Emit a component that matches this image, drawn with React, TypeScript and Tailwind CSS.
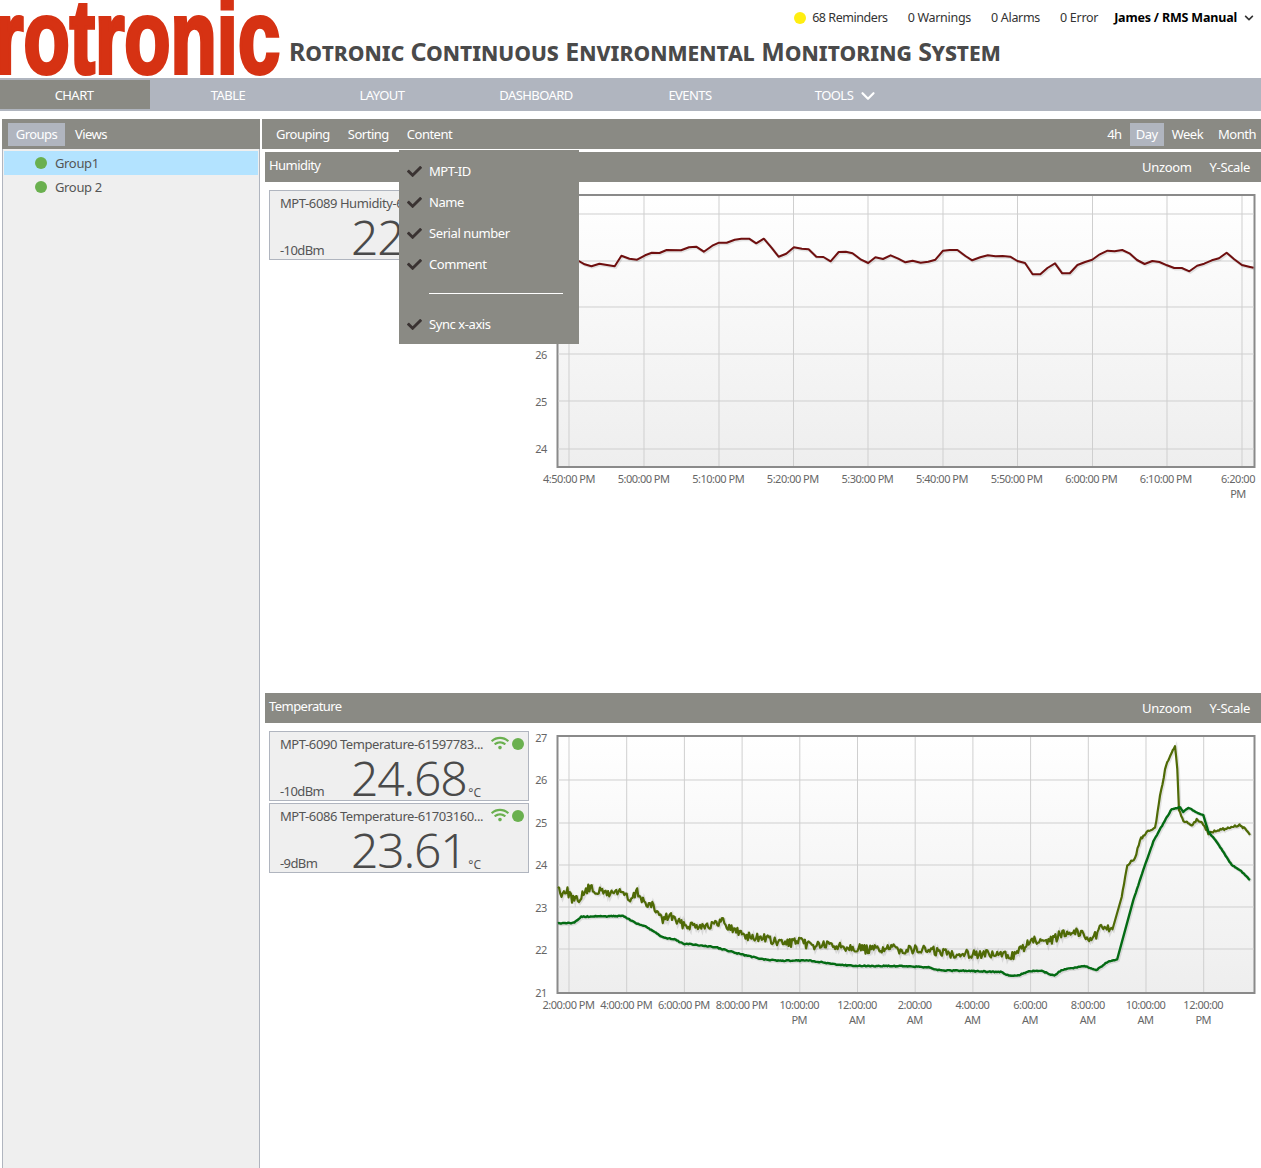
import { ChevronDown } from "lucide-react";
import { FaCheck, FaChevronDown, FaWifi } from "react-icons/fa";

const font = "font-['Noto_Sans','Open_Sans',sans-serif]";

const navItems = ["TABLE", "LAYOUT", "DASHBOARD", "EVENTS"];
const menuItems = ["MPT-ID", "Name", "Serial number", "Comment"];

// traced off the reference, crop coordinates
const humidityRaw = [
  [-40, 214], [42, 213], [55, 223], [70, 229], [88, 221], [105, 225], [122, 229], [137, 197], [155, 206], [172, 209],
  [190, 196], [205, 188], [222, 189], [238, 180], [270, 181], [288, 172], [304, 170], [321, 185], [340, 167], [355, 158],
  [372, 158], [390, 149], [405, 146], [422, 146], [438, 160], [455, 146], [472, 173], [488, 200], [505, 191], [522, 172],
  [540, 176], [555, 178], [572, 200], [588, 201], [604, 214], [622, 186], [638, 185], [653, 190], [672, 209], [688, 219],
  [704, 202], [721, 207], [738, 196], [755, 206], [771, 217], [787, 212], [805, 218], [822, 215], [838, 209], [855, 182],
  [870, 180], [887, 180], [905, 198], [920, 211], [938, 202], [955, 196], [972, 199], [988, 198], [1005, 200], [1021, 213],
  [1038, 219], [1055, 253], [1072, 253], [1088, 234], [1105, 220], [1121, 250], [1138, 250], [1155, 225], [1172, 216],
  [1188, 209], [1205, 193], [1222, 182], [1238, 184], [1255, 180], [1271, 190], [1288, 210], [1305, 222], [1322, 213],
  [1338, 216], [1355, 226], [1371, 234], [1388, 234], [1405, 244], [1422, 227], [1438, 221], [1455, 211], [1471, 205],
  [1488, 188], [1505, 208], [1522, 225], [1538, 230], [1548, 233],
];
const humidityLine = humidityRaw.map(([x, y]) => [560 + x * 0.448, 190 + y / 3]);

const oliveLeft = [
  [60, 48], [65, 70], [78, 58], [95, 95], [110, 80], [125, 55], [150, 65], [175, 70], [195, 60], [215, 95], [230, 65],
  [250, 105], [265, 110], [285, 150], [300, 135], [320, 160], [340, 165], [365, 165], [400, 165], [412, 150], [430, 175],
  [455, 190], [480, 205], [500, 200], [520, 215], [545, 220], [575, 215], [600, 225], [625, 225], [660, 228], [690, 230],
  [725, 240], [760, 235], [800, 238], [850, 240], [900, 250], [950, 250], [1000, 255], [1040, 255], [1065, 225], [1085, 210],
  [1105, 225], [1125, 205], [1150, 185], [1180, 185], [1195, 205], [1215, 195], [1228, 165], [1250, 178],
].map(([x, y]) => [530 + x * 0.466, 870 + y / 3]);
const oliveRight = [
  [365, 500], [382, 405], [405, 385], [420, 330], [440, 305], [465, 295], [480, 200], [495, 120], [505, 90], [525, 50],
  [532, 120], [537, 240], [550, 270], [575, 290], [590, 268], [610, 285], [625, 310], [650, 300], [680, 295], [715, 285],
  [735, 295], [750, 315],
].map(([x, y]) => [1000 + x / 3, 730 + y / 3]);

const greenLeft = [
  [60, 160], [95, 158], [110, 140], [200, 138], [225, 158], [250, 170], [285, 203], [310, 208], [330, 222], [340, 222],
  [400, 232], [450, 252], [500, 268], [540, 272], [600, 272], [670, 285], [700, 288], [800, 288], [855, 292], [875, 300],
  [1010, 306], [1030, 318], [1050, 316], [1070, 303], [1100, 303], [1125, 318], [1140, 300], [1190, 288], [1215, 300],
  [1240, 275], [1260, 268],
].map(([x, y]) => [530 + x * 0.466, 870 + y / 3]);
const greenRight = [
  [400, 510], [430, 420], [460, 335], [490, 280], [515, 237], [540, 232], [550, 245], [565, 233], [585, 245], [610, 255],
  [625, 305], [650, 335], [695, 405], [720, 420], [750, 450],
].map(([x, y]) => [1000 + x / 3, 730 + y / 3]);

function toPath(points: number[][]) {
  return points.map(([x, y], i) => `${i ? "L" : "M"}${x.toFixed(1)} ${y.toFixed(1)}`).join(" ");
}

// the sensor signal is noisy, so shake the traced outline a bit
function noisy(points: number[][], amount: number, seed: number) {
  let s = seed;
  const out: number[][] = [];
  for (let i = 0; i < points.length - 1; i++) {
    const [x0, y0] = points[i];
    const [x1, y1] = points[i + 1];
    const steps = Math.max(1, Math.round((x1 - x0) / 1.2));
    for (let k = 0; k < steps; k++) {
      s = (s * 1103515245 + 12345) % 2147483648;
      const r = (s >> 8) / 8388608 - 0.5;
      const t = k / steps;
      out.push([x0 + (x1 - x0) * t, y0 + (y1 - y0) * t + r * amount]);
    }
  }
  out.push(points[points.length - 1]);
  return out;
}

const olivePath = toPath([...noisy(oliveLeft, 9, 7), ...noisy(oliveRight, 2.5, 11)]);
const greenPath = toPath([...noisy(greenLeft, 1, 3), ...noisy(greenRight, 0.8, 5)]);

function Line({ d, color, width }: { d: string; color: string; width: number }) {
  return (
    <>
      <path d={d} fill="none" stroke="#000" strokeOpacity={0.1} strokeWidth={width + 1} transform="translate(1 1)" />
      <path d={d} fill="none" stroke={color} strokeWidth={width} strokeLinejoin="round" />
    </>
  );
}

function HumidityChart() {
  const hLines = [214, 261, 307, 354, 401, 449];
  const vLines = [569, 644, 719, 793.5, 868, 943, 1017.5, 1092.5, 1167, 1242];
  const labels = ["4:50:00 PM", "5:00:00 PM", "5:10:00 PM", "5:20:00 PM", "5:30:00 PM", "5:40:00 PM", "5:50:00 PM", "6:00:00 PM", "6:10:00 PM"];
  return (
    <svg viewBox="529 182 732 511" className="block h-[511px] w-[732px] shrink-0">
      <defs>
        <linearGradient id="plotHumidity" x1="0" y1="0" x2="0" y2="1">
          <stop offset="0" stopColor="#ffffff" />
          <stop offset="1" stopColor="#eeeeee" />
        </linearGradient>
      </defs>
      <rect x="557.5" y="195" width="697" height="272" fill="url(#plotHumidity)" stroke="#8a8a8a" strokeWidth="2" />
      {hLines.map((y) => <line key={y} x1="558" x2="1254" y1={y} y2={y} stroke="#cfcfcf" />)}
      {vLines.map((x) => <line key={x} x1={x} x2={x} y1="196" y2="466" stroke="#cfcfcf" />)}
      <Line d={toPath(humidityLine)} color="#6f0f0f" width={2} />
      <g fontSize="11" fill="#666" textAnchor="middle" letterSpacing="-0.5">
        {[["26", 355], ["25", 402], ["24", 449]].map(([t, y]) => <text key={t} x="541" y={Number(y) + 4}>{t}</text>)}
        {labels.map((t, i) => <text key={t} x={569 + i * 74.6} y="483">{t}</text>)}
        <text x="1238" y="483">6:20:00</text>
        <text x="1238" y="498">PM</text>
      </g>
    </svg>
  );
}

function TemperatureChart() {
  const hLines = [780, 823, 865, 907, 949];
  const ticks = [["27", 738], ["26", 780], ["25", 823], ["24", 865], ["23", 908], ["22", 950], ["21", 993]];
  const labels = [
    ["2:00:00 PM"], ["4:00:00 PM"], ["6:00:00 PM"], ["8:00:00 PM"], ["10:00:00", "PM"], ["12:00:00", "AM"], ["2:00:00", "AM"],
    ["4:00:00", "AM"], ["6:00:00", "AM"], ["8:00:00", "AM"], ["10:00:00", "AM"], ["12:00:00", "PM"],
  ];
  return (
    <svg viewBox="529 723 732 445" className="block h-[445px] w-[732px] shrink-0">
      <defs>
        <linearGradient id="plotTemperature" x1="0" y1="0" x2="0" y2="1">
          <stop offset="0" stopColor="#ffffff" />
          <stop offset="1" stopColor="#eeeeee" />
        </linearGradient>
      </defs>
      <rect x="557.5" y="736" width="697" height="257" fill="url(#plotTemperature)" stroke="#8a8a8a" strokeWidth="2" />
      {hLines.map((y) => <line key={y} x1="558" x2="1254" y1={y} y2={y} stroke="#cfcfcf" />)}
      {labels.map((_, i) => <line key={i} x1={569 + i * 57.7} x2={569 + i * 57.7} y1="737" y2="992" stroke="#cfcfcf" />)}
      <Line d={olivePath} color="#4f6a06" width={2.2} />
      <Line d={greenPath} color="#046b14" width={2.4} />
      <g fontSize="11" fill="#666" textAnchor="middle" letterSpacing="-0.5">
        {ticks.map(([t, y]) => <text key={t} x="541" y={Number(y) + 4}>{t}</text>)}
        {labels.map((lines, i) => (
          <g key={i}>
            <text x={568.5 + i * 57.7} y="1009">{lines[0]}</text>
            {lines[1] ? <text x={568.5 + i * 57.7} y="1024">{lines[1]}</text> : null}
          </g>
        ))}
      </g>
    </svg>
  );
}

function SensorCard({ name, power, value, unit }: { name: string; power: string; value: string; unit: string }) {
  return (
    <div className="flex h-[70px] w-[260px] flex-col border border-[#b0b5bf] bg-[#efefef] pl-[10px] pr-[4px] text-[#555]">
      <div className="flex h-[26px] items-start justify-between">
        <span className="mt-[3px] whitespace-nowrap text-[13px] tracking-[-0.42px]">{name}</span>
        <span className="mt-[2px] flex items-center gap-[3px]">
          <FaWifi size={18} className="text-[#6ab04f]" />
          <span className="mt-[1px] h-[12px] w-[12px] rounded-full bg-[#6ab04f]" />
        </span>
      </div>
      <div className="relative flex flex-1 items-end">
        <span className="w-[71px] text-[13px] leading-[18px] tracking-[-0.6px]">{power}</span>
        <span className="mb-[1px] text-[48px] font-light leading-[42px] tracking-[-1.2px] text-[#4a4a4a]">{value}</span>
        <span className="ml-[2px] text-[12px] leading-[14px]">{unit}</span>
      </div>
    </div>
  );
}

function SectionHeader({ title }: { title: string }) {
  return (
    <div className="flex h-[30px] items-center justify-between bg-[#8a8a84] pl-[4px] pr-[11px] pt-[2px] text-[13px] tracking-[-0.55px] text-white">
      <span className="-mt-[4px]">{title}</span>
      <div className="flex gap-[18px] tracking-[-0.35px]">
        <span>Unzoom</span>
        <span>Y-Scale</span>
      </div>
    </div>
  );
}

export default function App() {
  return (
    <div className={`relative h-[1168px] w-[1261px] overflow-hidden bg-white ${font}`}>
      <header className="flex h-[78px] overflow-hidden">
        <svg viewBox="0 0 283 76" className="h-[76px] w-[283px] shrink-0">
          <text
            x="-6"
            y="73"
            fontFamily="'Liberation Sans', sans-serif"
            fontWeight="700"
            fontSize="104"
            textLength="286"
            lengthAdjust="spacingAndGlyphs"
            fill="#d63213"
            stroke="#d63213"
            strokeWidth="4"
          >
            rotronic
          </text>
        </svg>
        <div className="flex flex-1 flex-col pl-[6px] pr-[7px]">
          <div className="mt-[9px] flex items-center justify-end text-[12.5px] leading-[17px] tracking-[-0.3px] text-[#333]">
            <span className="mr-[6px] h-[12px] w-[12px] rounded-full bg-[#ffee11]" />
            <span className="tracking-[-0.45px]">68 Reminders</span>
            <span className="ml-[20px]">0 Warnings</span>
            <span className="ml-[20px]">0 Alarms</span>
            <span className="ml-[20px]">0 Error</span>
            <span className="ml-[16px] font-bold tracking-[-0.18px] text-black">James / RMS Manual</span>
            <FaChevronDown size={10} className="ml-[7px] text-[#333]" />
          </div>
          <h1 className="mt-[8px] whitespace-nowrap text-[25px] font-bold leading-[34px] tracking-[-0.01px] text-[#4a4a4a] [font-variant:small-caps]">
            Rotronic Continuous Environmental Monitoring System
          </h1>
        </div>
      </header>

      <nav className="flex h-[33px] items-center bg-[#b0b5bf] pt-[2px] text-[13px] tracking-[-0.55px] text-white">
        <div className="-mt-[2px] flex h-[29px] w-[150px] items-center justify-center bg-[#8a8a84] pt-[2px] pr-[2px]">CHART</div>
        <div className="w-px" />
        {navItems.map((item) => (
          <div key={item} className="w-[154px] text-center">{item}</div>
        ))}
        <div className="flex w-[154px] items-center justify-center gap-[4px] pl-[6px]">
          TOOLS <ChevronDown size={22} strokeWidth={2.4} className="-my-1" />
        </div>
      </nav>

      <main className="mt-[8px] flex h-[1049px] pl-[2px]">
        <aside className="flex w-[258px] shrink-0 flex-col">
          <div className="flex h-[30px] items-center bg-[#8a8a84] pl-[6px] text-[13px] tracking-[-0.55px] text-white">
            <span className="flex h-[23px] w-[57px] items-center justify-center bg-[#b0b5bf] pt-[2px]">Groups</span>
            <span className="ml-[10px] pt-[2px]">Views</span>
          </div>
          <div className="flex-1 border-x border-[#b0b5bf] bg-[#efefef] pt-[2px] text-[13px] tracking-[-0.35px] text-[#555]">
            <div className="mx-px flex h-[24px] items-center bg-[#b3e3ff] pl-[31px]">
              <span className="mr-[8px] h-[12px] w-[12px] rounded-full bg-[#6ab04f]" />
              <span className="pt-[2px]">Group1</span>
            </div>
            <div className="mx-px flex h-[24px] items-center pl-[31px]">
              <span className="mr-[8px] h-[12px] w-[12px] rounded-full bg-[#6ab04f]" />
              <span className="pt-[2px]">Group 2</span>
            </div>
          </div>
        </aside>

        <section className="relative ml-[2px] flex-1">
          <div className="flex h-[30px] items-center justify-between bg-[#8a8a84] pl-[14px] pr-[5px] text-[13px] tracking-[-0.5px] text-white">
            <div className="flex gap-[18px] pt-[2px]">
              <span>Grouping</span>
              <span>Sorting</span>
              <span>Content</span>
            </div>
            <div className="flex items-center">
              <span className="mr-[8px] pt-[2px]">4h</span>
              <span className="flex h-[23px] w-[34px] items-center justify-center bg-[#b0b5bf] pt-[2px]">Day</span>
              <span className="ml-[8px] pt-[2px]">Week</span>
              <span className="ml-[15px] pt-[2px]">Month</span>
            </div>
          </div>

          <div className="ml-[3px] mt-[3px]">
            <SectionHeader title="Humidity" />
            <div className="flex">
              <div className="ml-[4px] mt-[8px] w-[260px]">
                <SensorCard name="MPT-6089 Humidity-61597783..." power="-10dBm" value="22.41" unit="%" />
              </div>
              <HumidityChart />
            </div>
            <SectionHeader title="Temperature" />
            <div className="flex">
              <div className="ml-[4px] mt-[8px] flex w-[260px] flex-col gap-[2px]">
                <SensorCard name="MPT-6090 Temperature-61597783..." power="-10dBm" value="24.68" unit="°C" />
                <SensorCard name="MPT-6086 Temperature-61703160..." power="-9dBm" value="23.61" unit="°C" />
              </div>
              <TemperatureChart />
            </div>
          </div>

          <div className="absolute left-[137px] top-[31px] z-10 h-[194px] w-[180px] bg-[#8a8a84] pl-[8px] pr-[16px] pt-[6px] text-[13px] tracking-[-0.42px] text-white">
            {menuItems.map((item) => (
              <div key={item} className="flex h-[31px] items-center gap-[7px]">
                <FaCheck size={15} className="text-[#3a3332]" />
                {item}
              </div>
            ))}
            <div className="ml-[22px] mt-[13px] border-t border-white" />
            <div className="mt-[15px] flex h-[31px] items-center gap-[7px]">
              <FaCheck size={15} className="text-[#3a3332]" />
              Sync x-axis
            </div>
          </div>
        </section>
      </main>
    </div>
  );
}
